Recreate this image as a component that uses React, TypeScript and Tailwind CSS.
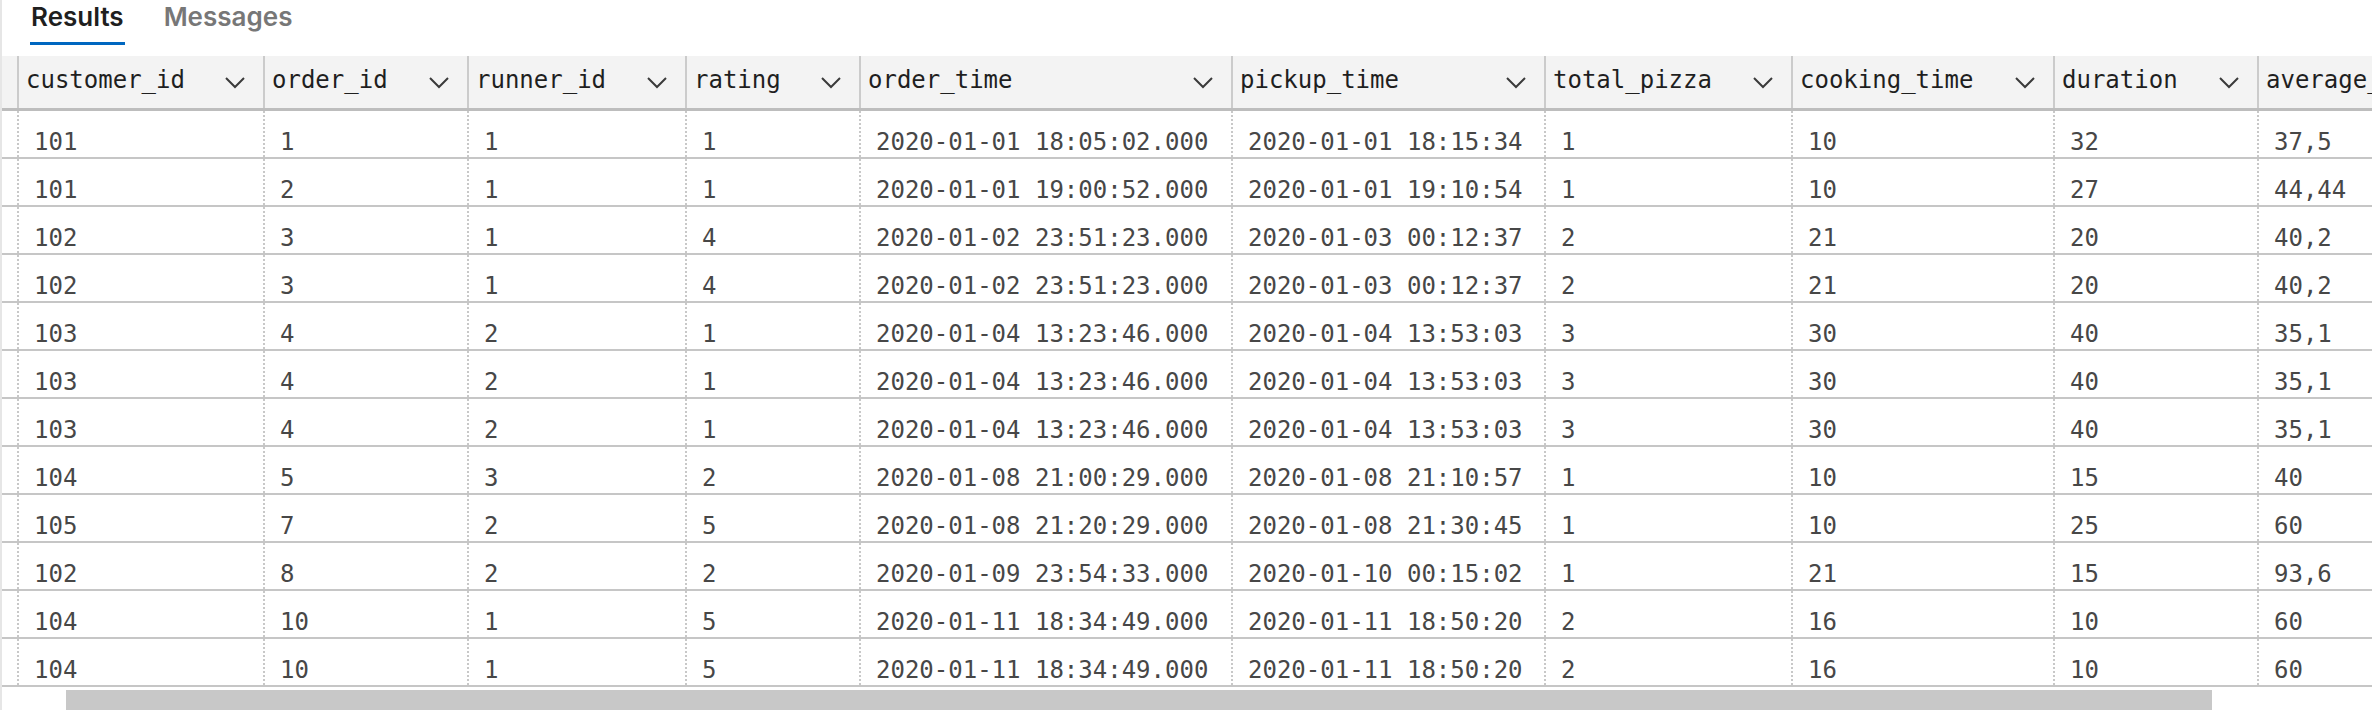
import React from "react";

type Col = { name: string; w: string };

const cols: Col[] = [
  { name: "customer_id", w: "w-[246px]" },
  { name: "order_id", w: "w-[204px]" },
  { name: "runner_id", w: "w-[218px]" },
  { name: "rating", w: "w-[174px]" },
  { name: "order_time", w: "w-[372px]" },
  { name: "pickup_time", w: "w-[313px]" },
  { name: "total_pizza", w: "w-[247px]" },
  { name: "cooking_time", w: "w-[262px]" },
  { name: "duration", w: "w-[204px]" },
  { name: "average_speed", w: "w-[300px]" },
];

const rows: string[][] = [
  ["101", "1", "1", "1", "2020-01-01 18:05:02.000", "2020-01-01 18:15:34", "1", "10", "32", "37,5"],
  ["101", "2", "1", "1", "2020-01-01 19:00:52.000", "2020-01-01 19:10:54", "1", "10", "27", "44,44"],
  ["102", "3", "1", "4", "2020-01-02 23:51:23.000", "2020-01-03 00:12:37", "2", "21", "20", "40,2"],
  ["102", "3", "1", "4", "2020-01-02 23:51:23.000", "2020-01-03 00:12:37", "2", "21", "20", "40,2"],
  ["103", "4", "2", "1", "2020-01-04 13:23:46.000", "2020-01-04 13:53:03", "3", "30", "40", "35,1"],
  ["103", "4", "2", "1", "2020-01-04 13:23:46.000", "2020-01-04 13:53:03", "3", "30", "40", "35,1"],
  ["103", "4", "2", "1", "2020-01-04 13:23:46.000", "2020-01-04 13:53:03", "3", "30", "40", "35,1"],
  ["104", "5", "3", "2", "2020-01-08 21:00:29.000", "2020-01-08 21:10:57", "1", "10", "15", "40"],
  ["105", "7", "2", "5", "2020-01-08 21:20:29.000", "2020-01-08 21:30:45", "1", "10", "25", "60"],
  ["102", "8", "2", "2", "2020-01-09 23:54:33.000", "2020-01-10 00:15:02", "1", "21", "15", "93,6"],
  ["104", "10", "1", "5", "2020-01-11 18:34:49.000", "2020-01-11 18:50:20", "2", "16", "10", "60"],
  ["104", "10", "1", "5", "2020-01-11 18:34:49.000", "2020-01-11 18:50:20", "2", "16", "10", "60"],
];

function Chevron() {
  return (
    <svg width="22" height="13" viewBox="0 0 22 13" className="shrink-0 mt-[10px]">
      <polyline points="2,2 11,11 20,2" fill="none" stroke="#3a3a3a" strokeWidth="2" />
    </svg>
  );
}

export default function App() {
  return (
    <div className="w-[2372px] h-[710px] overflow-hidden bg-white border-l-2 border-[#e6e6e6] flex flex-col">
      {/* Tabs */}
      <div className="h-[56px] shrink-0 flex items-start pl-[28px] gap-[39px] font-['Inter',sans-serif]">
        <div className="flex flex-col">
          <span className="text-[26px] leading-[32px] pt-[1px] font-semibold text-[#1f1f1f] px-[1px]">Results</span>
          <div className="mt-[9px] h-[3px] bg-[#0067c0]" />
        </div>
        <div className="flex flex-col">
          <span className="text-[26px] leading-[32px] pt-[1px] font-semibold text-[#777777]">Messages</span>
        </div>
      </div>

      {/* Grid */}
      <div className="flex flex-col font-['DejaVu_Sans_Mono',monospace] text-[24px] leading-[28px]">
        <div className="flex h-[55px] shrink-0 bg-[#f3f3f3] border-b-[3px] border-[#bdbdbd]">
          <div className="w-[15px] shrink-0" />
          {cols.map((c) => (
            <div
              key={c.name}
              className={`${c.w} shrink-0 flex items-start justify-between border-l-2 border-[#cbcbcb] pl-[7px] pt-[10px] pr-[17px] overflow-hidden whitespace-nowrap text-[#1f1f1f]`}
            >
              <span>{c.name}</span>
              <Chevron />
            </div>
          ))}
        </div>
        {rows.map((r, i) => (
          <div key={i} className="flex h-[48px] shrink-0 border-b-2 border-[#c6c6c6]">
            <div className="w-[15px] shrink-0" />
            {r.map((v, j) => (
              <div
                key={j}
                className={`${cols[j].w} shrink-0 border-l-2 border-dotted border-[#c8c8c8] pl-[15px] pt-[17px] overflow-hidden whitespace-nowrap text-[#474747]`}
              >
                {v}
              </div>
            ))}
          </div>
        ))}
        <div className="mt-[3px] ml-[64px] w-[2146px] h-[20px] shrink-0 bg-[#c8c8c8]" />
      </div>
    </div>
  );
}
